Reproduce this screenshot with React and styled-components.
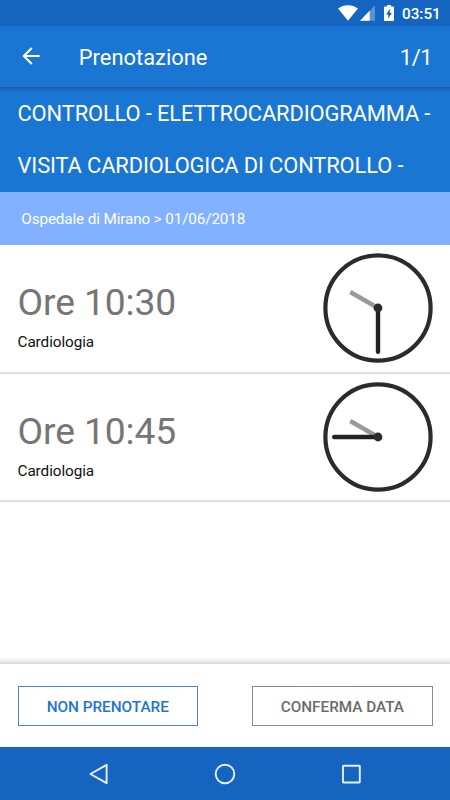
import React from "react";
import styled, { createGlobalStyle } from "styled-components";

const slots = [
    { time: "10:30", ward: "Cardiologia", hour: 300, minute: 180 },
    { time: "10:45", ward: "Cardiologia", hour: 300, minute: 270 },
];

function Clock({ hour, minute }) {
    return (
        <ClockFace viewBox="0 0 110 110">
            <circle cx="55" cy="55" r="52.6" fill="none" stroke="#2b2b2b" strokeWidth="4.2" />
            <path d="M55 55V23" stroke="#999" strokeWidth="4.4" transform={`rotate(${hour} 55 55)`} />
            <path d="M55 55V11.2" stroke="#222" strokeWidth="4.4" strokeLinecap="round" transform={`rotate(${minute} 55 55)`} />
            <circle cx="55" cy="55" r="4.4" fill="#2b2b2b" />
        </ClockFace>
    );
}

function App() {
    return (
        <Screen>
            <GlobalStyle />
            {/* Status bar */}
            <StatusBar>
                <svg width="20" height="16" viewBox="0 0 20 16" fill="#fff">
                    <path d="M10 15.7L0 3.5C5.7-1 14.3-1 20 3.5Z" />
                </svg>
                <SignalIcon width="15" height="16" viewBox="0 0 15 16" fill="#fff">
                    <path d="M15 .3V15.8H0Z" opacity=".3" />
                    <path d="M9.7 5.8V15.8H0Z" />
                </SignalIcon>
                <BatteryIcon width="10" height="16" viewBox="0 0 10 16" fill="#fff">
                    <path fillRule="evenodd" d="M3 0H7V1.6H9.2Q10 1.6 10 2.4V15.2Q10 16 9.2 16H.8Q0 16 0 15.2V2.4Q0 1.6.8 1.6H3ZM5.8 3.8L2.2 9.4H4.3V13.8L7.8 7.9H5.8Z" />
                </BatteryIcon>
                <StatusTime>03:51</StatusTime>
            </StatusBar>
            {/* Toolbar */}
            <Toolbar>
                <svg width="18" height="18" viewBox="0 0 18 18" fill="none" stroke="#fff" strokeWidth="2.1">
                    <path d="M17.8 9H2M9.8 1.1L1.8 9L9.8 16.9" />
                </svg>
                <ToolbarTitle>Prenotazione</ToolbarTitle>
                <Counter>1/1</Counter>
            </Toolbar>
            {/* Exams */}
            <Exams>
                <Exam>CONTROLLO - ELETTROCARDIOGRAMMA -</Exam>
                <Exam>VISITA CARDIOLOGICA DI CONTROLLO -</Exam>
            </Exams>
            <Place>Ospedale di Mirano &gt; 01/06/2018</Place>
            {/* Slots */}
            <SlotList>
                {slots.map((slot) => (
                    <Slot key={slot.time}>
                        <div>
                            <SlotTime>Ore {slot.time}</SlotTime>
                            <SlotWard>{slot.ward}</SlotWard>
                        </div>
                        <Clock hour={slot.hour} minute={slot.minute} />
                    </Slot>
                ))}
            </SlotList>
            {/* Actions */}
            <FooterShadow />
            <Footer>
                <ActionButton $color="#1976d2" $border="#4b89d8">NON PRENOTARE</ActionButton>
                <ActionButton $color="#6a6a6a" $border="#8a8a8a">CONFERMA DATA</ActionButton>
            </Footer>
            {/* System navigation */}
            <NavBar>
                <svg width="22" height="22" viewBox="0 0 22 22">
                    <path d="M18.6 1.8V20.2L2.4 11Z" />
                </svg>
                <svg width="22" height="22" viewBox="0 0 22 22">
                    <circle cx="11" cy="11" r="9.3" />
                </svg>
                <svg width="22" height="22" viewBox="0 0 22 22">
                    <rect x="3" y="2.7" width="16.8" height="16.8" rx=".5" />
                </svg>
            </NavBar>
        </Screen>
    );
}

export default App;

const GlobalStyle = createGlobalStyle`
* {
    box-sizing: border-box;
}
body {
    margin: 0;
    overflow: hidden;
}
`

const Screen = styled.div`
display: flex;
flex-direction: column;
width: 450px;
height: 800px;
background-color: #fff;
font-family: Roboto, "Liberation Sans", sans-serif;
`

const StatusBar = styled.div`
display: flex;
align-items: center;
flex: none;
height: 26px;
padding-left: 338.3px;
background-color: #1565c0;
color: #fff;
`

const SignalIcon = styled.svg`
margin-left: 2px;
`

const BatteryIcon = styled.svg`
margin-left: 8.5px;
`

const StatusTime = styled.span`
margin: 2px 0 0 8.2px;
font-size: 15.3px;
font-weight: 500;
line-height: 18px;
`

const Toolbar = styled.div`
display: flex;
align-items: center;
flex: none;
height: 61px;
padding: 0 18px 0 22px;
background-color: #1976d2;
color: #fff;

> svg {
    margin-bottom: 1px;
}
`

const ToolbarTitle = styled.span`
flex: 1;
margin: 3px 0 0 38.8px;
font-size: 21.9px;
line-height: 26px;
`

const Counter = styled.span`
margin-top: 3px;
font-size: 21.9px;
line-height: 26px;
letter-spacing: -0.5px;
`

const Exams = styled.div`
flex: none;
height: 105.4px;
padding-top: 1px;
background: linear-gradient(#165baa 0, #1868bd 2px, #1974cf 5px, #1976d2 7px);
color: #fff;
`

const Exam = styled.div`
height: 52.2px;
padding-left: 17.5px;
font-size: 21.9px;
line-height: 52.2px;
letter-spacing: -0.13px;
white-space: nowrap;
`

const Place = styled.div`
flex: none;
height: 52.3px;
padding-left: 21.3px;
background-color: #82b1ff;
color: #fff;
font-size: 15.3px;
line-height: 54.6px;
letter-spacing: -0.14px;
`

const SlotList = styled.div`
flex: 1;
padding-top: 0.6px;
`

const Slot = styled.div`
display: flex;
justify-content: space-between;
height: 128.4px;
padding: 8px 17.3px 0 17.5px;
border-bottom: 2px solid #e2e2e2;
`

const SlotTime = styled.div`
margin-top: 26.9px;
color: #757575;
font-size: 37.2px;
line-height: 44px;
letter-spacing: -0.1px;
`

const SlotWard = styled.div`
margin-top: 9.1px;
color: #111;
font-size: 15.3px;
line-height: 18px;
letter-spacing: -0.08px;
`

const ClockFace = styled.svg`
width: 110px;
height: 110px;
`

const FooterShadow = styled.div`
flex: none;
height: 7px;
background: linear-gradient(#fff, #f0f0f0 50%, #d8d8d8);
`

const Footer = styled.div`
display: flex;
justify-content: space-between;
flex: none;
height: 83.4px;
padding: 22px 17.5px 0 17.6px;
`

const ActionButton = styled.button`
width: 180.3px;
height: 40px;
padding: 2px 0 0;
border: 1px solid ${(props) => props.$border};
background: #fff;
color: ${(props) => props.$color};
font-family: inherit;
font-size: 15.3px;
font-weight: 500;
`

const NavBar = styled.div`
display: flex;
align-items: center;
justify-content: space-between;
flex: none;
height: 52.6px;
padding: 0 88px 0 88px;
background-color: #1565c0;

> svg {
    fill: none;
    stroke: #e8effa;
    stroke-width: 1.9;
    stroke-linejoin: round;
}
`
